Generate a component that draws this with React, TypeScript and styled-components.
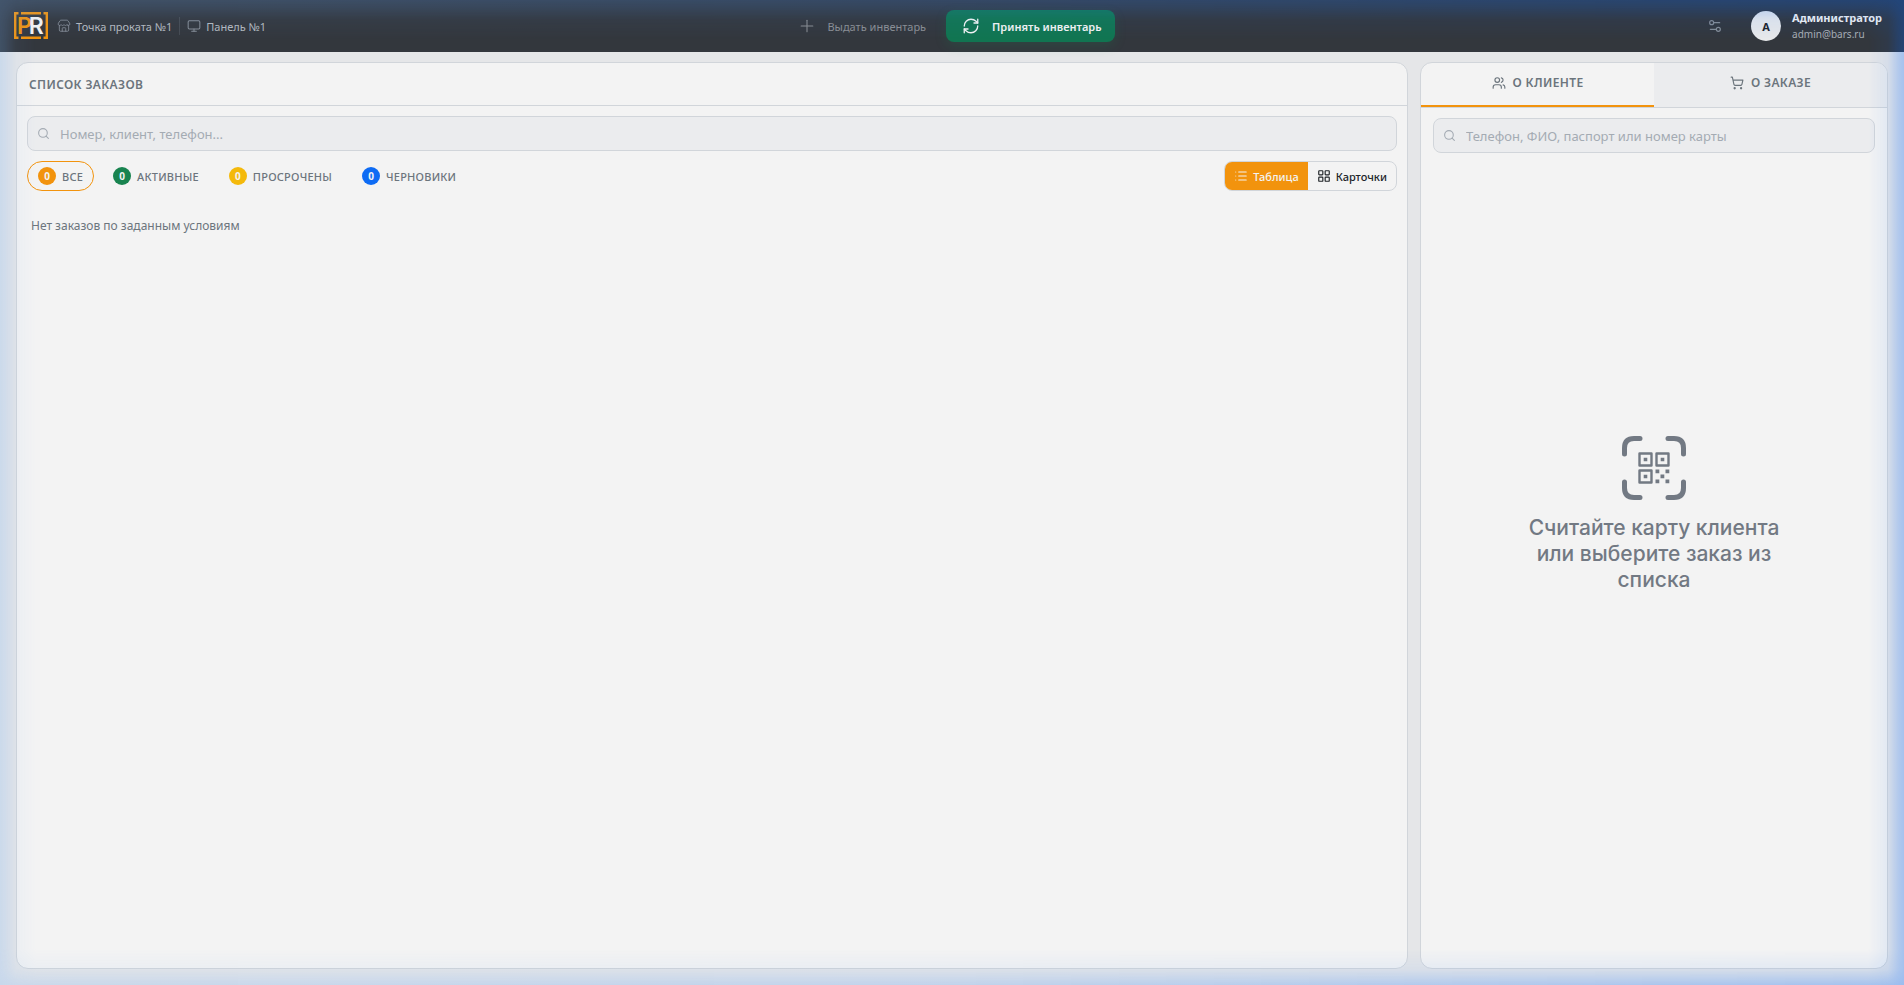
import React from "react";
import styled, { createGlobalStyle } from "styled-components";
import {
  Store, Monitor, Plus, RefreshCw, Settings2, Search, List, LayoutGrid, Users, ShoppingCart,
} from "lucide-react";

const GlobalStyle = createGlobalStyle`
  *, *::before, *::after { box-sizing: border-box; }
  html, body, #root { height: 100%; }
  body {
    margin: 0;
    background: #e5e6e8;
    color: #212529;
    font-family: "Noto Sans", sans-serif;
    font-size: 13px;
  }
  button, input { font-family: inherit; }
`;

const Page = styled.div`
  min-height: 100%;
  display: flex;
  flex-direction: column;
`;

const EdgeGlow = styled.div`
  position: fixed;
  inset: 0;
  pointer-events: none;
  background: linear-gradient(to right, rgba(113, 174, 248, 0.26), rgba(60, 140, 250, 0.25) 50%, rgba(0, 102, 255, 0.33));
  mask-image:
    linear-gradient(to right, rgba(0, 0, 0, 0.85), rgba(0, 0, 0, 0.65) 6px, rgba(0, 0, 0, 0.2) 16px, transparent 36px),
    linear-gradient(to left, rgba(0, 0, 0, 0.85), rgba(0, 0, 0, 0.65) 6px, rgba(0, 0, 0, 0.2) 16px, transparent 36px),
    linear-gradient(to bottom, rgba(0, 0, 0, 0.85), rgba(0, 0, 0, 0.65) 7px, rgba(0, 0, 0, 0.2) 20px, transparent 40px),
    linear-gradient(to top, rgba(0, 0, 0, 0.85), rgba(0, 0, 0, 0.6) 6px, rgba(0, 0, 0, 0.2) 16px, transparent 36px);
`;

const Header = styled.header`
  height: 52px;
  flex: none;
  display: grid;
  grid-template-columns: 1fr auto 1fr;
  align-items: center;
  padding: 0 22px 0 14px;
  background: #33373d;
`;

const Location = styled.div`
  display: flex;
  align-items: center;
  gap: 9px;
`;

const Place = styled.span`
  display: flex;
  align-items: center;
  gap: 5px;
  font-size: 11px;
  color: #b3b9bf;
  svg { color: #858c95; }
`;

const Divider = styled.span`
  width: 1px;
  height: 18px;
  margin: 0 -2px;
  background: #464b52;
`;

const Actions = styled.div`
  display: flex;
  gap: 7px;
`;

const ActionButton = styled.button<{ $primary?: boolean }>`
  display: flex;
  align-items: center;
  gap: ${(p) => (p.$primary ? 12 : 10)}px;
  height: 32px;
  padding: 0 13px 0 16px;
  border: 0;
  border-radius: 8px;
  font-size: 11px;
  font-weight: ${(p) => (p.$primary ? 600 : 400)};
  color: ${(p) => (p.$primary ? "#f3f3f3" : "#8b8e92")};
  background: ${(p) => (p.$primary ? "#117551" : "transparent")};
  box-shadow: ${(p) => (p.$primary ? "0 4px 12px rgba(25, 135, 84, 0.2)" : "none")};
`;

const Account = styled.div`
  display: flex;
  align-items: center;
  justify-content: flex-end;
  gap: 11px;
`;

const IconButton = styled.button`
  display: flex;
  padding: 8px;
  margin-right: 9px;
  border: 0;
  background: none;
  color: #858c95;
`;

const Avatar = styled.span`
  display: flex;
  align-items: center;
  justify-content: center;
  width: 30px;
  height: 30px;
  border-radius: 50%;
  background: #e8e9eb;
  font-size: 11px;
  font-weight: 700;
`;

const UserName = styled.div`
  font-size: 11px;
  line-height: 16px;
  font-weight: 700;
  color: #f3f3f3;
`;

const UserMail = styled.div`
  font-size: 10px;
  line-height: 16px;
  color: #a9aeb4;
`;

const Main = styled.main`
  flex: 1;
  display: grid;
  grid-template-columns: minmax(0, 1fr) 25%;
  gap: 12px;
  padding: 10px 16px 16px;
`;

const Panel = styled.section`
  display: flex;
  flex-direction: column;
  overflow: hidden;
  background: #f3f3f3;
  border: 1px solid #d1d5da;
  border-radius: 12px;
`;

const PanelTitle = styled.h1`
  margin: 0;
  height: 43px;
  padding: 0 12px;
  border-bottom: 1px solid #d1d5da;
  font-size: 12px;
  line-height: 44px;
  font-weight: 600;
  letter-spacing: 0.03em;
  text-transform: uppercase;
  color: #6c757d;
`;

const PanelBody = styled.div<{ $side?: boolean }>`
  flex: 1;
  display: flex;
  flex-direction: column;
  gap: 10px;
  padding: ${(p) => (p.$side ? "10px 12px" : "10px")};
`;

const SearchBox = styled.label`
  display: flex;
  align-items: center;
  gap: 10px;
  height: 35px;
  padding: 0 9px;
  border: 1px solid #d1d5da;
  border-radius: 8px;
  background: #ebecee;
  color: #a4abb3;
  svg { flex: none; }
`;

const SearchInput = styled.input`
  flex: 1;
  min-width: 0;
  border: 0;
  padding: 0;
  outline: 0;
  background: none;
  font-size: 13px;
  color: #212529;
  &::placeholder { color: #a4abb3; opacity: 1; }
`;

const Toolbar = styled.div`
  display: flex;
  justify-content: space-between;
`;

const Filters = styled.div`
  display: flex;
  gap: 8px;
`;

const Chip = styled.button<{ $active?: boolean }>`
  display: flex;
  align-items: center;
  gap: 6px;
  height: 30px;
  padding: 0 10px;
  border: 1px solid ${(p) => (p.$active ? "#f2930d" : "transparent")};
  border-radius: 15px;
  background: none;
  font-size: 11px;
  font-weight: 500;
  letter-spacing: 0.02em;
  text-transform: uppercase;
  color: #6c757d;
`;

const Count = styled.span<{ $color: string }>`
  display: flex;
  align-items: center;
  justify-content: center;
  width: 18px;
  height: 18px;
  border-radius: 50%;
  background: ${(p) => p.$color};
  color: #f3f3f3;
  font-size: 10px;
  font-weight: 700;
  letter-spacing: 0;
`;

const ViewSwitch = styled.div`
  display: flex;
  border: 1px solid #d1d5da;
  border-radius: 8px;
  overflow: hidden;
`;

const ViewButton = styled.button<{ $active?: boolean }>`
  display: flex;
  align-items: center;
  gap: 5px;
  height: 28px;
  padding: 0 9px;
  border: 0;
  font-size: 11px;
  font-weight: 500;
  background: ${(p) => (p.$active ? "#f2930d" : "transparent")};
  color: ${(p) => (p.$active ? "#f3f3f3" : "#212529")};
`;

const EmptyNote = styled.p`
  margin: 0;
  padding: 16px 4px;
  font-size: 12px;
  line-height: 18px;
  color: #6c757d;
`;

const Tabs = styled.div`
  display: grid;
  grid-template-columns: 1fr 1fr;
  border-bottom: 1px solid #d1d5da;
`;

const Tab = styled.button<{ $active?: boolean }>`
  display: flex;
  align-items: center;
  justify-content: center;
  gap: 7px;
  height: 44px;
  padding: 0 0 3px;
  border: 0;
  border-bottom: 2px solid ${(p) => (p.$active ? "#f2930d" : "transparent")};
  background: ${(p) => (p.$active ? "transparent" : "#ebecee")};
  font-size: 12px;
  font-weight: 600;
  letter-spacing: 0.03em;
  text-transform: uppercase;
  color: #6c757d;
`;

const Placeholder = styled.div`
  flex: 1;
  display: flex;
  flex-direction: column;
  align-items: center;
  justify-content: center;
  gap: 15px;
  padding-bottom: 92px;
  color: #727983;
`;

const PlaceholderText = styled.p`
  margin: 0;
  max-width: 264px;
  text-align: center;
  font-family: Inter, sans-serif;
  font-size: 21px;
  line-height: 26px;
  font-weight: 500;
`;

const Logo = () => (
  <svg width="34" height="28" viewBox="0 0 34 28" role="img" aria-label="PR">
    <path
      d="M4.500 1.200H1.200V25.800H4.500M29.500 1.200H32.800V25.800H29.500M7 1.200H27M7 25.800H27"
      fill="none" stroke="#f2930d" strokeWidth="2.400"
    />
    <text x="3" y="21.500" fontFamily="Inter, sans-serif" fontWeight="600" fontSize="23" fill="#f2930d">
      P<tspan dx="-3" fill="#f3f3f3">R</tspan>
    </text>
  </svg>
);

const ScanIcon = () => (
  <svg width="64" height="64" viewBox="0 0 64 64" aria-hidden="true">
    <path
      d="M2.5 18V12Q2.5 2.500 12 2.500H18M46 2.500H52Q61.500 2.500 61.500 12V18M61.500 46V52Q61.500 61.500 52 61.500H46M18 61.500H12Q2.500 61.500 2.500 52V46"
      fill="none" stroke="currentColor" strokeWidth="5" strokeLinecap="round"
    />
    <g fill="none" stroke="currentColor" strokeWidth="2.400" strokeLinejoin="round">
      <rect x="17.500" y="17.500" width="12" height="12" />
      <rect x="34.500" y="17.500" width="12" height="12" />
      <rect x="17.500" y="34.500" width="12" height="12" />
    </g>
    <path
      d="M21.700 21.700h3.600v3.600h-3.600zM38.700 21.700h3.600v3.600h-3.600zM21.700 38.700h3.600v3.600h-3.600zM33.500 33.500h3.800v3.800h-3.800zM43.500 33.500h3.800v3.800h-3.800zM38.500 38.500h3.800v3.800h-3.800zM33.500 43.500h3.800v3.800h-3.800zM43.500 43.500h3.800v3.800h-3.800z"
      fill="currentColor"
    />
  </svg>
);

const filters = [
  { label: "Все", color: "#f2930d", active: true },
  { label: "Активные", color: "#18834f" },
  { label: "Просрочены", color: "#f4b90b" },
  { label: "Черновики", color: "#0d6bf4" },
];

export default function App() {
  return (
    <Page>
      <GlobalStyle />
      <Header>
        <Location>
          <Logo />
          <Place><Store size={14} strokeWidth={1.5} />Точка проката №1</Place>
          <Divider />
          <Place><Monitor size={14} strokeWidth={1.75} />Панель №1</Place>
        </Location>
        <Actions>
          <ActionButton><Plus size={20} strokeWidth={1.25} />Выдать инвентарь</ActionButton>
          <ActionButton $primary><RefreshCw size={18} strokeWidth={1.75} />Принять инвентарь</ActionButton>
        </Actions>
        <Account>
          <IconButton aria-label="Настройки"><Settings2 size={16} strokeWidth={1.75} /></IconButton>
          <Avatar>А</Avatar>
          <div>
            <UserName>Администратор</UserName>
            <UserMail>admin@bars.ru</UserMail>
          </div>
        </Account>
      </Header>
      <Main>
        <Panel>
          <PanelTitle>Список заказов</PanelTitle>
          <PanelBody>
            <SearchBox>
              <Search size={13} />
              <SearchInput aria-label="Поиск заказа" placeholder="Номер, клиент, телефон..." />
            </SearchBox>
            <Toolbar>
              <Filters>
                {filters.map((f) => (
                  <Chip key={f.label} $active={f.active}>
                    <Count $color={f.color}>0</Count>
                    {f.label}
                  </Chip>
                ))}
              </Filters>
              <ViewSwitch>
                <ViewButton $active><List size={14} strokeWidth={1.75} />Таблица</ViewButton>
                <ViewButton><LayoutGrid size={14} strokeWidth={2} />Карточки</ViewButton>
              </ViewSwitch>
            </Toolbar>
            <EmptyNote>Нет заказов по заданным условиям</EmptyNote>
          </PanelBody>
        </Panel>
        <Panel as="aside">
          <Tabs role="tablist">
            <Tab role="tab" aria-selected $active><Users size={14} strokeWidth={2} />О клиенте</Tab>
            <Tab role="tab" aria-selected={false}><ShoppingCart size={14} strokeWidth={2} />О заказе</Tab>
          </Tabs>
          <PanelBody $side>
            <SearchBox>
              <Search size={13} />
              <SearchInput aria-label="Поиск клиента" placeholder="Телефон, ФИО, паспорт или номер карты" />
            </SearchBox>
            <Placeholder>
              <ScanIcon />
              <PlaceholderText>Считайте карту клиента или выберите заказ из списка</PlaceholderText>
            </Placeholder>
          </PanelBody>
        </Panel>
      </Main>
      <EdgeGlow />
    </Page>
  );
}
